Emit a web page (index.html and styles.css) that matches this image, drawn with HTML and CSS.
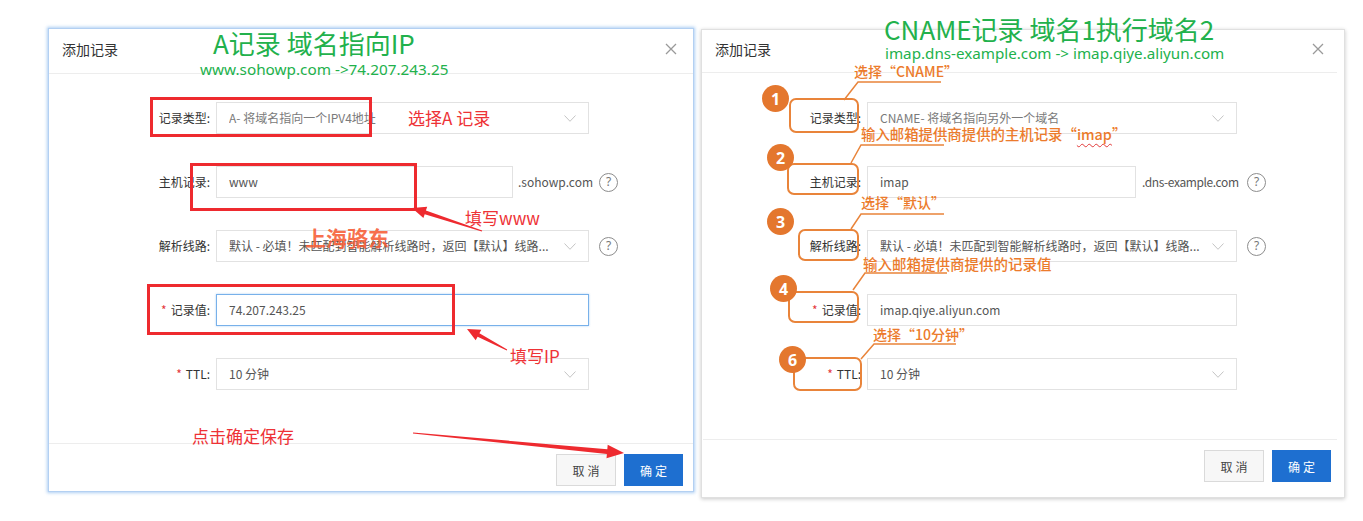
FILE: index.html
```html
<!DOCTYPE html>
<html lang="zh-CN">
<head>
<meta charset="utf-8">
<title>添加记录</title>
<link rel="stylesheet" href="styles.css">
</head>
<body>
<div class="stage">
  <div class="panels">
    <section class="dialog dialog-a">
      <header class="dlg-head">
        <span class="dlg-title">添加记录</span>
        <svg class="dlg-close" width="12" height="12" viewBox="0 0 12 12"><path d="M1 1l10 10M11 1L1 11" stroke="#9a9a9a" stroke-width="1.3"/></svg>
      </header>
      <div class="dlg-body">
        <div class="row">
          <span class="lbl">记录类型:</span>
          <div class="field select wide"><span class="val muted">A- 将域名指向一个IPV4地址</span><svg class="chev" viewBox="0 0 12 7"><path d="M.5.5 6 6.3 11.5.5" fill="none" stroke="#c4c4c4"/></svg></div>
        </div>
        <div class="row">
          <span class="lbl">主机记录:</span>
          <div class="field short">www</div>
          <span class="suffix">.sohowp.com</span>
          <span class="help">?</span>
        </div>
        <div class="row">
          <span class="lbl">解析线路:</span>
          <div class="field select wide"><span class="val">默认 - 必填！未匹配到智能解析线路时，返回【默认】线路...</span><svg class="chev" viewBox="0 0 12 7"><path d="M.5.5 6 6.3 11.5.5" fill="none" stroke="#c4c4c4"/></svg></div>
          <span class="help">?</span>
        </div>
        <div class="row">
          <span class="lbl"><span class="req">*</span>记录值:</span>
          <div class="field wide focus">74.207.243.25</div>
        </div>
        <div class="row">
          <span class="lbl"><span class="req">*</span>TTL:</span>
          <div class="field select wide"><span class="val">10 分钟</span><svg class="chev" viewBox="0 0 12 7"><path d="M.5.5 6 6.3 11.5.5" fill="none" stroke="#c4c4c4"/></svg></div>
        </div>
      </div>
      <footer class="dlg-foot">
        <button class="btn">取消</button>
        <button class="btn primary">确定</button>
      </footer>
    </section>

    <section class="dialog dialog-b">
      <header class="dlg-head">
        <span class="dlg-title">添加记录</span>
        <svg class="dlg-close" width="12" height="12" viewBox="0 0 12 12"><path d="M1 1l10 10M11 1L1 11" stroke="#9a9a9a" stroke-width="1.3"/></svg>
      </header>
      <div class="dlg-body">
        <div class="row">
          <span class="lbl">记录类型:</span>
          <div class="field select wide"><span class="val muted">CNAME- 将域名指向另外一个域名</span><svg class="chev" viewBox="0 0 12 7"><path d="M.5.5 6 6.3 11.5.5" fill="none" stroke="#c4c4c4"/></svg></div>
        </div>
        <div class="row">
          <span class="lbl">主机记录:</span>
          <div class="field short">imap</div>
          <span class="suffix">.dns-example.com</span>
          <span class="help">?</span>
        </div>
        <div class="row">
          <span class="lbl">解析线路:</span>
          <div class="field select wide"><span class="val">默认 - 必填！未匹配到智能解析线路时，返回【默认】线路...</span><svg class="chev" viewBox="0 0 12 7"><path d="M.5.5 6 6.3 11.5.5" fill="none" stroke="#c4c4c4"/></svg></div>
          <span class="help">?</span>
        </div>
        <div class="row">
          <span class="lbl"><span class="req">*</span>记录值:</span>
          <div class="field wide">imap.qiye.aliyun.com</div>
        </div>
        <div class="row">
          <span class="lbl"><span class="req">*</span>TTL:</span>
          <div class="field select wide"><span class="val">10 分钟</span><svg class="chev" viewBox="0 0 12 7"><path d="M.5.5 6 6.3 11.5.5" fill="none" stroke="#c4c4c4"/></svg></div>
        </div>
      </div>
      <footer class="dlg-foot">
        <button class="btn">取消</button>
        <button class="btn primary">确定</button>
      </footer>
    </section>
  </div>

  <svg class="marks" width="1363" height="521" viewBox="0 0 1363 521">
    <g fill="none" stroke="#ee2a2f" stroke-width="3">
      <rect x="151.5" y="98.5" width="219" height="37"/>
      <rect x="191.5" y="164.5" width="224" height="45"/>
      <rect x="148.5" y="285.5" width="305" height="48"/>
    </g>
    <g fill="#ee2a2f">
      <polygon points="482.2,230.5 425.9,210.5 427.2,206.7 412,208 423.4,218.1 424.7,214.3 481.8,231.5"/>
      <polygon points="507.2,349.6 479.4,333.2 481.3,329.7 467,329 475.7,340.3 477.6,336.8 506.8,350.4"/>
      <polygon points="413.1,432.4 607.3,449.3 607.7,444.8 624,453 606.5,458.2 606.9,453.9 412.9,433.6"/>
    </g>
    <g fill="none" stroke="#e9843a" stroke-width="2">
      <rect x="790" y="99" width="68" height="33" rx="6"/>
      <rect x="788" y="164" width="70" height="30" rx="6"/>
      <rect x="799" y="230" width="59" height="30" rx="6"/>
      <rect x="789" y="292" width="69" height="30" rx="6"/>
      <rect x="794" y="358" width="67" height="32" rx="6"/>
    </g>
    <g fill="none" stroke="#e9843a" stroke-width="1.5">
      <polyline points="844,100 858,82 941,82"/>
      <polyline points="851,163 861,145 944,145"/>
      <polyline points="851,229 861,214 944,214"/>
      <polyline points="853,290 865,273 947,273"/>
      <polyline points="861,359 874,344 956,344"/>
    </g>
  </svg>

  <div class="note g-title a-title">A记录 域名指向IP</div>
  <div class="note g-sub a-sub">www.sohowp.com -&gt;74.207.243.25</div>
  <div class="note g-title b-title">CNAME记录 域名1执行域名2</div>
  <div class="note g-sub b-sub">imap.dns-example.com -&gt; imap.qiye.aliyun.com</div>

  <div class="note red r1">选择A 记录</div>
  <div class="note red r2">填写www</div>
  <div class="note red r3">填写IP</div>
  <div class="note red r4">点击确定保存</div>
  <div class="note wm">上海骆东</div>

  <div class="badge b1">1</div>
  <div class="badge b2">2</div>
  <div class="badge b3">3</div>
  <div class="badge b4">4</div>
  <div class="badge b6">6</div>

  <div class="note orange o1">选择“CNAME”</div>
  <div class="note orange o2">输入邮箱提供商提供的主机记录“<span class="spell">imap</span>”</div>
  <div class="note orange o3">选择“默认”</div>
  <div class="note orange o4">输入邮箱提供商提供的记录值</div>
  <div class="note orange o6">选择“10分钟”</div>
</div>
</body>
</html>
```

FILE: styles.css
```css
* { box-sizing: border-box; }

body {
  margin: 0;
  background: #fff;
  font-family: "Noto Sans CJK SC", "Noto Sans", sans-serif;
  color: #333;
}

.stage {
  position: relative;
  width: 1363px;
  height: 521px;
  overflow: hidden;
}

.panels {
  display: flex;
  align-items: flex-start;
  gap: 7px;
  padding: 28px 0 0 48px;
}

.dialog {
  background: #fff;
  display: flex;
  flex-direction: column;
}

.dialog-a {
  width: 646px;
  height: 464px;
  border: 1px solid #b3d0f2;
  box-shadow: 0 0 3px 1px rgba(120, 175, 235, 0.6);
}

.dialog-b {
  width: 644px;
  height: 469px;
  margin-top: 1px;
  border: 1px solid #e0e0e0;
  box-shadow: 0 1px 4px rgba(0, 0, 0, 0.22);
}

.dlg-head {
  display: flex;
  align-items: center;
  justify-content: space-between;
  border-bottom: 1px solid #ededed;
  flex: none;
}

.dialog-a .dlg-head {
  height: 45px;
  padding: 0 16px 4px 13px;
}

.dialog-b .dlg-head {
  height: 43px;
  margin-right: 7px;
  padding: 0 13px 5px 13px;
}

.dlg-title {
  font-size: 14px;
  line-height: 20px;
  color: #333;
}

.dlg-body {
  display: flex;
  flex-direction: column;
  gap: 32px;
  flex: none;
}

.dialog-a .dlg-body { height: 369px; padding-top: 28px; }
.dialog-b .dlg-body { height: 366px; padding-top: 29px; }

.row {
  display: flex;
  align-items: center;
  height: 32px;
}

.lbl {
  flex: none;
  width: 161px;
  margin-right: 6px;
  text-align: right;
  font-size: 12px;
  line-height: 16px;
  color: #333;
}

.dialog-b .lbl { width: 159px; }

.req {
  color: #e4393c;
  margin-right: 4px;
}

.field {
  flex: none;
  height: 32px;
  border: 1px solid #e2e2e2;
  display: flex;
  align-items: center;
  padding: 0 12px;
  font-size: 12px;
  line-height: 16px;
  color: #555;
  white-space: nowrap;
  overflow: hidden;
  background: #fff;
}

.dialog-a .wide { width: 373px; }
.dialog-a .short { width: 297px; }
.dialog-b .wide { width: 370px; }
.dialog-b .short { width: 269px; }

.select { justify-content: space-between; gap: 10px; }

.val {
  overflow: hidden;
  text-overflow: ellipsis;
}

.muted { color: #7a7a7a; }

.chev {
  flex: none;
  width: 12px;
  height: 7px;
}

.focus {
  border-color: #78b1ea;
  box-shadow: 0 0 2px rgba(80, 150, 230, 0.45);
}

.suffix {
  flex: none;
  white-space: nowrap;
  font-size: 12px;
  line-height: 16px;
  color: #555;
}

.dialog-a .suffix { width: 76px; padding-left: 5px; }
.dialog-b .suffix { width: 101px; padding-left: 6px; letter-spacing: -0.4px; }

.help {
  flex: none;
  width: 19px;
  height: 19px;
  margin-left: 10px;
  border: 1.5px solid #8d8d8d;
  border-radius: 50%;
  display: flex;
  align-items: center;
  justify-content: center;
  font-family: "Noto Sans", sans-serif;
  font-size: 12px;
  line-height: 1;
  color: #777;
}

.dlg-foot {
  flex: none;
  display: flex;
  justify-content: flex-end;
  gap: 8px;
  border-top: 1px solid #ededed;
}

.dialog-a .dlg-foot { padding: 10px 10px 5px; }
.dialog-b .dlg-foot { padding: 10px 6px 15px; margin: 0 7px 0 1px; }

.btn {
  width: 60px;
  height: 32px;
  font-family: inherit;
  font-size: 12px;
  letter-spacing: 3px;
  padding: 0 0 0 3px;
  border: 1px solid #dadada;
  background: #f7f7f7;
  color: #444;
}

.btn.primary {
  width: 59px;
  background: #1e6fd0;
  border-color: #1e6fd0;
  color: #fff;
}

/* annotations layer */
.marks {
  position: absolute;
  left: 0;
  top: 0;
  pointer-events: none;
}

.note {
  position: absolute;
  white-space: nowrap;
  line-height: 1;
}

.g-title {
  color: #22b14c;
  font-size: 26px;
}

.g-sub {
  color: #22b14c;
  font-family: "Noto Sans", sans-serif;
  font-size: 15px;
}

.a-title { left: 213px; top: 30px; }
.a-sub { left: 200px; top: 62px; font-size: 15.3px; }
.b-title { left: 884px; top: 16px; }
.b-sub { left: 885px; top: 46px; font-size: 15.2px; }

.red {
  color: #ee3236;
  font-size: 17px;
}

.r1 { left: 408px; top: 109px; }
.r2 { left: 465px; top: 209px; }
.r3 { left: 510px; top: 347px; }
.r4 { left: 192px; top: 427px; }

.wm {
  left: 305px;
  top: 227px;
  font-size: 21px;
  font-weight: 700;
  color: rgba(246, 92, 52, 0.88);
}

.badge {
  position: absolute;
  width: 27px;
  height: 27px;
  border-radius: 50%;
  background: #e4772e;
  color: #fff;
  font-family: "Noto Sans", sans-serif;
  font-size: 16px;
  font-weight: 700;
  display: flex;
  align-items: center;
  justify-content: center;
  line-height: 1;
}

.b1 { left: 762px; top: 85px; }
.b2 { left: 767px; top: 144px; }
.b3 { left: 767px; top: 208px; }
.b4 { left: 770px; top: 275px; }
.b6 { left: 779px; top: 346px; }

.orange {
  color: #ec7b2c;
  font-size: 14px;
  font-weight: 500;
}

.o1 { left: 854px; top: 64px; }
.o2 { left: 861px; top: 127px; font-size: 14.4px; }
.o3 { left: 861px; top: 195px; }
.o4 { left: 863px; top: 257px; font-size: 14.5px; }
.o6 { left: 873px; top: 327px; }

.spell {
  text-decoration: underline wavy #e23a3a;
  text-decoration-thickness: 1px;
  text-underline-offset: 3px;
}
```
